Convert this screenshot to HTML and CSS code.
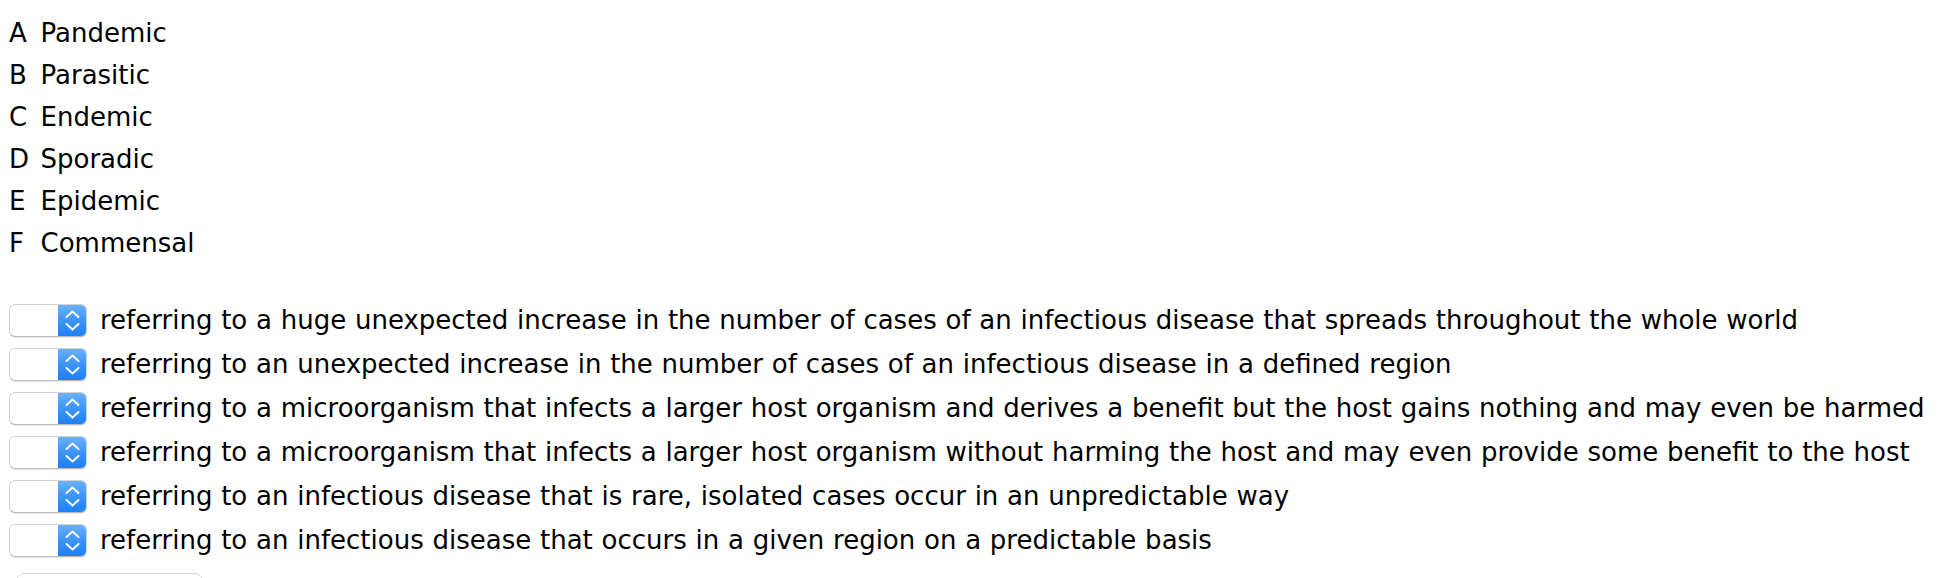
FILE: index.html
```html
<!DOCTYPE html>
<html>
<head>
<meta charset="utf-8">
<link rel="stylesheet" href="styles.css">
</head>
<body>
<div class="page">
  <ul class="options">
    <li class="option"><span class="letter">A</span><span class="name">Pandemic</span></li>
    <li class="option"><span class="letter">B</span><span class="name">Parasitic</span></li>
    <li class="option"><span class="letter">C</span><span class="name">Endemic</span></li>
    <li class="option"><span class="letter">D</span><span class="name">Sporadic</span></li>
    <li class="option"><span class="letter">E</span><span class="name">Epidemic</span></li>
    <li class="option"><span class="letter">F</span><span class="name">Commensal</span></li>
  </ul>
  <div class="questions">
    <div class="question">
      <div class="select"><span class="field"></span><span class="stepper"><svg width="29" height="33" viewBox="0 0 29 33"><path d="M8.5 13 L14.5 7.5 L20.5 13 M8.5 20 L14.5 25.5 L20.5 20" fill="none" stroke="#fff" stroke-width="2" stroke-linecap="round" stroke-linejoin="round"/></svg></span></div>
      <span class="qtext">referring to a huge unexpected increase in the number of cases of an infectious disease that spreads throughout the whole world</span>
    </div>
    <div class="question">
      <div class="select"><span class="field"></span><span class="stepper"><svg width="29" height="33" viewBox="0 0 29 33"><path d="M8.5 13 L14.5 7.5 L20.5 13 M8.5 20 L14.5 25.5 L20.5 20" fill="none" stroke="#fff" stroke-width="2" stroke-linecap="round" stroke-linejoin="round"/></svg></span></div>
      <span class="qtext">referring to an unexpected increase in the number of cases of an infectious disease in a defined region</span>
    </div>
    <div class="question">
      <div class="select"><span class="field"></span><span class="stepper"><svg width="29" height="33" viewBox="0 0 29 33"><path d="M8.5 13 L14.5 7.5 L20.5 13 M8.5 20 L14.5 25.5 L20.5 20" fill="none" stroke="#fff" stroke-width="2" stroke-linecap="round" stroke-linejoin="round"/></svg></span></div>
      <span class="qtext">referring to a microorganism that infects a larger host organism and derives a benefit but the host gains nothing and may even be harmed</span>
    </div>
    <div class="question">
      <div class="select"><span class="field"></span><span class="stepper"><svg width="29" height="33" viewBox="0 0 29 33"><path d="M8.5 13 L14.5 7.5 L20.5 13 M8.5 20 L14.5 25.5 L20.5 20" fill="none" stroke="#fff" stroke-width="2" stroke-linecap="round" stroke-linejoin="round"/></svg></span></div>
      <span class="qtext">referring to a microorganism that infects a larger host organism without harming the host and may even provide some benefit to the host</span>
    </div>
    <div class="question">
      <div class="select"><span class="field"></span><span class="stepper"><svg width="29" height="33" viewBox="0 0 29 33"><path d="M8.5 13 L14.5 7.5 L20.5 13 M8.5 20 L14.5 25.5 L20.5 20" fill="none" stroke="#fff" stroke-width="2" stroke-linecap="round" stroke-linejoin="round"/></svg></span></div>
      <span class="qtext">referring to an infectious disease that is rare, isolated cases occur in an unpredictable way</span>
    </div>
    <div class="question">
      <div class="select"><span class="field"></span><span class="stepper"><svg width="29" height="33" viewBox="0 0 29 33"><path d="M8.5 13 L14.5 7.5 L20.5 13 M8.5 20 L14.5 25.5 L20.5 20" fill="none" stroke="#fff" stroke-width="2" stroke-linecap="round" stroke-linejoin="round"/></svg></span></div>
      <span class="qtext">referring to an infectious disease that occurs in a given region on a predictable basis</span>
    </div>
  </div>
  <div class="button-stub"></div>
</div>
</body>
</html>
```
FILE: styles.css
```css
html, body {
  margin: 0;
  padding: 0;
  background: #fff;
}
body {
  font-family: "DejaVu Sans", Verdana, sans-serif;
  font-size: 26px;
  color: #000;
  overflow: hidden;
}
.page {
  padding: 12px 0 0 9px;
}
.options {
  list-style: none;
  margin: 0;
  padding: 0;
}
.option {
  display: flex;
  height: 42px;
  line-height: 42px;
}
.letter {
  width: 31.5px;
}
.questions {
  margin-top: 40px;
  display: flex;
  flex-direction: column;
  gap: 11px;
}
.question {
  display: flex;
  align-items: center;
  gap: 13px;
  white-space: nowrap;
}
.select {
  display: flex;
  width: 78px;
  height: 33px;
  box-sizing: border-box;
  border-radius: 6px;
  border: 1px solid #d2d2d2;
  border-bottom-color: #b8b8b8;
  background: #fff;
  overflow: hidden;
  box-shadow: 0 1px 1px rgba(0,0,0,0.08);
  flex: none;
}
.field {
  flex: 1;
}
.stepper {
  width: 29px;
  margin: -1px -1px -1px 0;
  height: 33px;
  background: linear-gradient(#6db3fb, #3b95fb 50%, #1a7ffa);
  display: flex;
}
.qtext {
  line-height: 33px;
  word-spacing: 0.5px;
}
.button-stub {
  margin: 16px 0 0 7px;
  width: 187px;
  height: 30px;
  box-sizing: border-box;
  border: 1px solid #d6d6d6;
  border-radius: 8px;
}
```
